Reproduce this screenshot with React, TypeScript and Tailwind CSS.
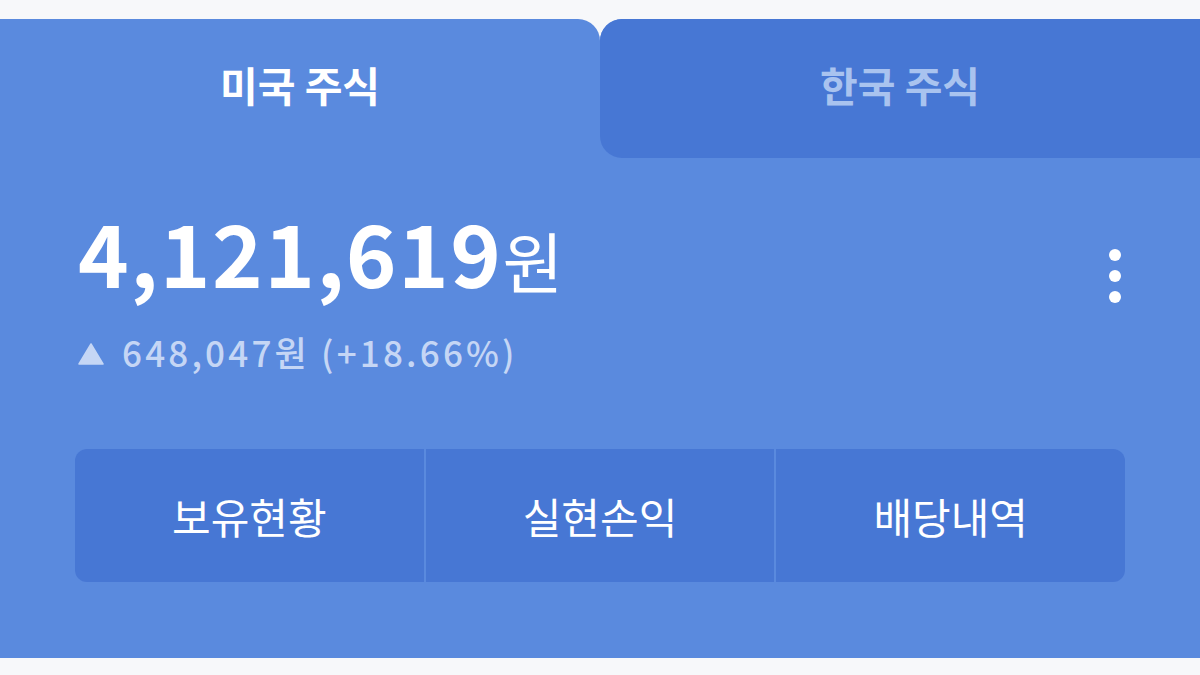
import React, { useState } from 'react';

const font = { fontFamily: '"Noto Sans CJK KR", "Noto Sans", sans-serif' };

const App: React.FC = () => {
    const [tab, setTab] = useState<'us' | 'kr'>('us');

    return (
        <div className="w-[1200px] h-[675px] bg-[#f7f8fa] pt-[19px] pb-[17px] flex flex-col overflow-hidden" style={font}>
            {/* Tabs */}
            <div className="flex h-[139px] shrink-0">
                <button
                    onClick={() => setTab('us')}
                    className="w-[600px] bg-[#5a8ade] rounded-tr-[22px] flex items-center justify-center pb-[8px] text-[41px] font-bold text-white"
                >
                    미국 주식
                </button>
                <div className="flex-1 bg-[#5a8ade] rounded-tl-[22px]">
                    <button
                        onClick={() => setTab('kr')}
                        className="w-full h-full bg-[#4777d4] rounded-tl-[22px] rounded-bl-[22px] flex items-center justify-center pb-[8px] text-[41px] font-bold text-[#a9c3ef]"
                    >
                        한국 주식
                    </button>
                </div>
            </div>

            {/* Body */}
            <div className="flex-1 bg-[#5a8ade] px-[75px] pt-[50px]">
                <div className="flex items-start justify-between">
                    <div className="pl-[3px]">
                        <div className="flex items-baseline text-white leading-none">
                            <span className="text-[86px] font-bold tracking-[1.5px]">4,121,619</span>
                            <span className="text-[66px] font-normal">원</span>
                        </div>
                        <div className="flex items-center mt-[40px] text-[35px] font-medium tracking-[3.2px] text-[#c5d6f5] leading-none">
                            <svg width="26" height="22" viewBox="0 0 26 22" className="mr-[18px] mt-[4px]">
                                <path d="M13 1 L25 21 L1 21 Z" fill="#c5d6f5" strokeLinejoin="round" stroke="#c5d6f5" strokeWidth="1.5" />
                            </svg>
                            <span>648,047원 (+18.66%)</span>
                        </div>
                    </div>
                    <button className="mt-[41px] mr-[3px] flex flex-col items-center gap-[9px] w-[14px]">
                        <span className="w-[12px] h-[12px] rounded-full bg-white" />
                        <span className="w-[12px] h-[12px] rounded-full bg-white" />
                        <span className="w-[12px] h-[12px] rounded-full bg-white" />
                    </button>
                </div>

                <div className="mt-[80px] h-[133px] flex rounded-[12px] overflow-hidden bg-[#5a8ade] gap-[2px]">
                    {['보유현황', '실현손익', '배당내역'].map((label) => (
                        <button
                            key={label}
                            className="flex-1 bg-[#4777d4] flex items-center justify-center text-[42px] text-white"
                        >
                            {label}
                        </button>
                    ))}
                </div>
            </div>
            <span className="hidden">{tab}</span>
        </div>
    );
};

export default App;
